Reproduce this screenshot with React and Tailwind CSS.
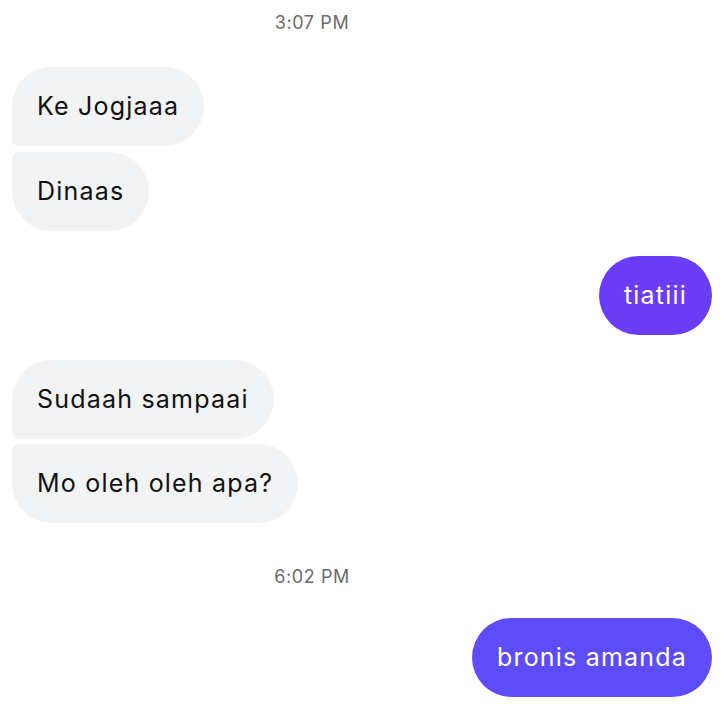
import React from "react";

const font = { fontFamily: "Inter, 'Noto Sans', sans-serif" };

const Time = ({ children, className = "" }) => (
  <div className={`pr-[100px] text-center text-[18px] leading-[22px] tracking-[0.6px] text-[#6b6b70] ${className}`}>
    {children}
  </div>
);

const Incoming = ({ children, first, last }) => {
  const corners = first && last
    ? "rounded-[40px]"
    : first
    ? "rounded-t-[40px] rounded-br-[40px] rounded-bl-[6px]"
    : last
    ? "rounded-b-[40px] rounded-tr-[40px] rounded-tl-[6px]"
    : "rounded-r-[40px] rounded-l-[6px]";
  return (
    <div className="flex justify-start">
      <div
        className={`bg-[#f2f3f5] text-[#111] text-[25px] leading-[31px] tracking-[1.2px] px-[25px] py-[24px] ${corners}`}
      >
        {children}
      </div>
    </div>
  );
};

const Outgoing = ({ children, color }) => (
  <div className="flex justify-end">
    <div
      className={`${color} text-white text-[25px] leading-[31px] tracking-[1.2px] px-[25px] py-[24px] rounded-[40px]`}
    >
      {children}
    </div>
  </div>
);

export default function App() {
  return (
    <div className="w-full bg-white pl-[12px] pr-[15px] pt-[12px]" style={font}>
      <Time>3:07 PM</Time>

      <div className="flex flex-col gap-[6px] mt-[33px]">
        <Incoming first>Ke Jogjaaa</Incoming>
        <Incoming last>Dinaas</Incoming>
      </div>

      <div className="mt-[25px]">
        <Outgoing color="bg-[#6b3cf5]">tiatiii</Outgoing>
      </div>

      <div className="flex flex-col gap-[5px] mt-[25px]">
        <Incoming first>Sudaah sampaai</Incoming>
        <Incoming last>Mo oleh oleh apa?</Incoming>
      </div>

      <Time className="mt-[43px]">6:02 PM</Time>

      <div className="mt-[30px]">
        <Outgoing color="bg-[#5d4cf7]">bronis amanda</Outgoing>
      </div>
    </div>
  );
}
